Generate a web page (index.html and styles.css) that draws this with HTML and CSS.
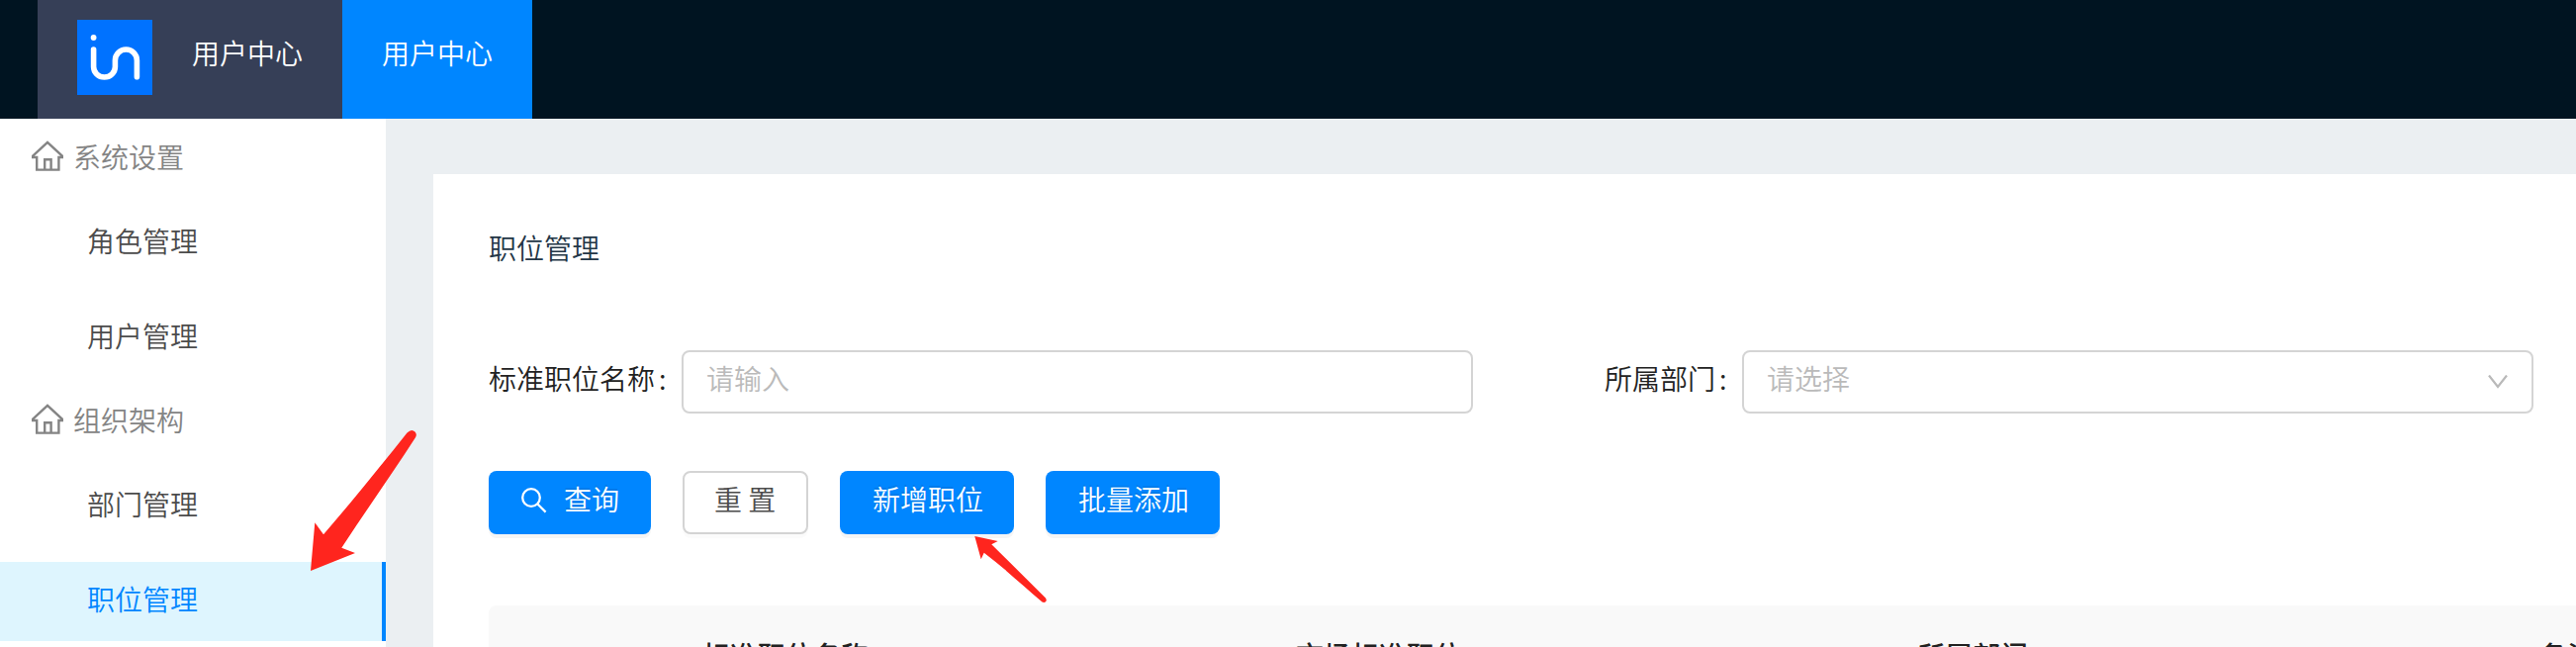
FILE: index.html
```html
<!DOCTYPE html>
<html lang="zh-CN">
<head>
<meta charset="utf-8">
<title>用户中心</title>
<link rel="stylesheet" href="styles.css">
</head>
<body>
<header class="topbar">
  <div class="brand">
    <svg class="logo" viewBox="0 0 76 76">
      <rect width="76" height="76" fill="#0072ff"/>
      <circle cx="16.6" cy="18" r="2.9" fill="#fff"/>
      <path d="M16.6 30V47.5a10.9 10.5 0 0 0 21.8 0V41a11 11 0 0 1 22 0V57.8" fill="none" stroke="#fff" stroke-width="5.6" stroke-linecap="round"/>
    </svg>
    <span class="nav-text">用户中心</span>
  </div>
  <a class="nav-item"><span class="nav-text">用户中心</span></a>
</header>
<div class="layout">
  <nav class="sidebar">
    <div class="group-title">
      <svg class="home" viewBox="0 0 32 32"><path d="M1.2 15.6 16 1.8 30.8 15.6V17H27.4V29.6H5.2V17H1.2ZM13.2 29.6V19.3H19.6V29.6"/></svg>
      <span>系统设置</span>
    </div>
    <ul class="menu">
      <li class="menu-item">角色管理</li>
      <li class="menu-item">用户管理</li>
    </ul>
    <div class="group-title">
      <svg class="home" viewBox="0 0 32 32"><path d="M1.2 15.6 16 1.8 30.8 15.6V17H27.4V29.6H5.2V17H1.2ZM13.2 29.6V19.3H19.6V29.6"/></svg>
      <span>组织架构</span>
    </div>
    <ul class="menu">
      <li class="menu-item">部门管理</li>
      <li class="menu-item active">职位管理</li>
    </ul>
  </nav>
  <main class="card">
    <h1 class="title">职位管理</h1>
    <div class="filters">
      <div class="field">
        <label class="label">标准职位名称<span class="colon">:</span></label>
        <div class="control"><span>请输入</span></div>
      </div>
      <div class="field">
        <label class="label">所属部门<span class="colon">:</span></label>
        <div class="control"><span>请选择</span>
          <svg class="chevron" viewBox="0 0 20 14"><path d="M1 .5 10 12 19 .5"/></svg>
        </div>
      </div>
    </div>
    <div class="actions">
      <button class="btn primary search">
        <svg class="lens" viewBox="0 0 26 26"><circle cx="10" cy="10" r="8.8"/><path d="M16.2 16.2 24.6 24.6"/></svg>
        <span>查询</span>
      </button>
      <button class="btn plain"><span>重 置</span></button>
      <button class="btn primary"><span>新增职位</span></button>
      <button class="btn primary"><span>批量添加</span></button>
    </div>
    <div class="table-head">
      <span>标准职位名称</span>
      <span>市场标准职位</span>
      <span>所属部门</span>
      <span>备注</span>
    </div>
  </main>
</div>
<svg class="arrows" viewBox="0 0 2604 654">
  <path d="M314 577 318.3 528.3 327 540.3C355 508 384 472 411.5 437.5Q416 433 419.5 436.5 422 439 419.8 442.5C397 478 370 516 345.3 553.7L359 559Z"/>
  <path d="M985.3 542 1008.7 547 1002.3 550.3 1057 604.5Q1058.5 607 1057 608.3 1055.5 609.5 1053.5 608.5C1034 592 1015 574 994.7 558.7L991.7 565.3Z"/>
</svg>
</body>
</html>
```

FILE: styles.css
```css
* { box-sizing: border-box; }
body {
  margin: 0;
  width: 2604px;
  height: 654px;
  overflow: hidden;
  position: relative;
  background: #ebeff2;
  font: 28px/40px "Noto Sans CJK SC", sans-serif;
  font-weight: 350;
  color: #222;
}
.topbar { display: flex; height: 120px; padding-left: 38px; background: #001421; color: #fff; }
.brand { display: flex; width: 308px; padding: 20px 40px 0; gap: 40px; background: #363f57; }
.brand .nav-text { padding-top: 13px; }
.logo { width: 76px; height: 76px; flex: none; }
.nav-text { white-space: nowrap; }
.nav-item { width: 192px; padding: 33px 40px 0; background: #0086ff; }
.layout { display: flex; height: 534px; }
.sidebar { width: 390px; flex: none; background: #fff; }
.group-title { display: flex; height: 78px; padding: 18px 0 0 32px; gap: 10px; color: #848484; }
.home { width: 32px; height: 32px; margin-top: 4px; fill: none; stroke: #848484; stroke-width: 2.4; }
.menu { list-style: none; margin: 0; padding: 8px 0 4px; display: flex; flex-direction: column; gap: 16px; }
.menu-item { height: 80px; padding: 17px 0 0 88px; color: #4c4c4c; }
.menu-item.active { background: #def5fe; color: #0086ff; border-right: 4px solid #0086ff; }
.card { margin: 56px 0 0 48px; width: 2166px; height: 478px; overflow: hidden; padding: 54px 0 0 56px; background: #fff; }
.title { margin: 0; font-size: 28px; font-weight: inherit; line-height: 40px; color: #233646; }
.filters { display: flex; gap: 133px; margin-top: 84px; }
.field { display: flex; }
.label { display: flex; padding-top: 8px; white-space: nowrap; }
.colon { width: 27px; padding-left: 4px; }
.control { display: flex; justify-content: space-between; width: 800px; height: 64px; padding: 6px 24px 0 23px; border: 2px solid #d4d4d4; border-radius: 8px; color: #bababa; }
.chevron { width: 20px; height: 14px; margin-top: 17px; fill: none; stroke: #b9b9b9; stroke-width: 2.2; }
.actions { display: flex; gap: 32px; margin-top: 58px; }
.btn { display: flex; align-items: flex-start; height: 64px; padding: 8px 31px 0 33px; border: 0; border-radius: 8px; font: inherit; white-space: nowrap; }
.primary { background: #0086ff; color: #fff; box-shadow: 0 4px 0 rgba(0, 0, 0, .04); text-shadow: 0 -2px 0 rgba(0, 0, 0, .1); }
.plain { width: 127px; padding: 6px 30px 0; background: #fff; color: #4c4c4c; border: 2px solid #d4d4d4; box-shadow: 0 4px 0 rgba(0, 0, 0, .015); }
.search { gap: 17px; padding-right: 32px; }
.lens { width: 26px; height: 26px; margin-top: 9px; fill: none; stroke: #fff; stroke-width: 2.3; }
.table-head { display: grid; grid-template-columns: 600px 628px 629px 1fr; height: 100px; margin-top: 72px; padding: 30px 0 0 216px; background: #f9f9f9; border-radius: 8px 0 0 0; font-weight: 500; white-space: nowrap; }
.arrows { position: absolute; left: 0; top: 0; width: 2604px; height: 654px; fill: #ff251e; pointer-events: none; }
```
